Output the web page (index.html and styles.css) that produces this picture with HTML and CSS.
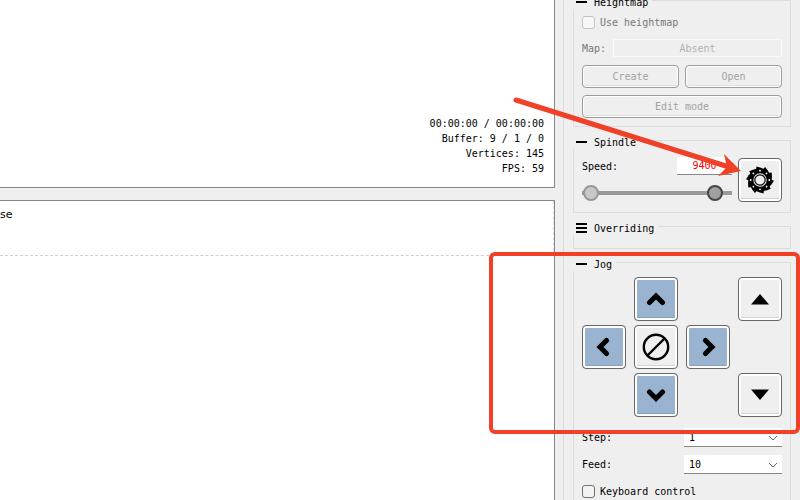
FILE: index.html
```html
<!DOCTYPE html>
<html lang="en">
<head>
<meta charset="utf-8">
<title>Machine control</title>
<link rel="stylesheet" href="styles.css">
</head>
<body>
<div class="app">
  <main class="work">
    <section class="view">
      <p>00:00:00 / 00:00:00</p>
      <p>Buffer: 9 / 1 / 0</p>
      <p>Vertices: 145</p>
      <p>FPS: 59</p>
    </section>
    <section class="console"><p class="entry">se</p></section>
  </main>
  <aside class="side">
    <section class="group muted">
      <h2><span class="minus"></span>Heightmap</h2>
      <label class="check"><input type="checkbox" disabled>Use heightmap</label>
      <div class="map-row"><label for="map">Map:</label><input id="map" type="text" value="Absent" disabled></div>
      <div class="pair"><button class="btn" disabled>Create</button><button class="btn" disabled>Open</button></div>
      <button class="btn wide" disabled>Edit mode</button>
    </section>

    <section class="group spindle">
      <h2><span class="minus"></span>Spindle</h2>
      <div class="spindle-row">
        <div class="speed">
          <div class="speed-row"><label for="speed">Speed:</label><input id="speed" type="text" value="9400"></div>
          <div class="range">
            <input class="low" type="range" min="0" max="100" value="1" aria-label="Minimum speed">
            <input class="high" type="range" min="0" max="100" value="93" aria-label="Spindle speed">
          </div>
        </div>
        <button class="btn tool" aria-label="Spindle on">
          <svg width="28" height="28" viewBox="-14 -14 28 28">
            <defs><path id="tooth" d="M-4-10L-3.500-13.500L1-12.200L4-10Z"/><circle id="hole" cy="-9.300" r="0.900"/></defs>
            <circle r="9.200" fill="none" stroke="#000" stroke-width="5"/>
            <use href="#tooth"/><use href="#tooth" transform="rotate(36)"/><use href="#tooth" transform="rotate(72)"/><use href="#tooth" transform="rotate(108)"/><use href="#tooth" transform="rotate(144)"/><use href="#tooth" transform="rotate(180)"/><use href="#tooth" transform="rotate(216)"/><use href="#tooth" transform="rotate(252)"/><use href="#tooth" transform="rotate(288)"/><use href="#tooth" transform="rotate(324)"/>
            <g fill="#fff"><use href="#hole"/><use href="#hole" transform="rotate(45)"/><use href="#hole" transform="rotate(90)"/><use href="#hole" transform="rotate(135)"/><use href="#hole" transform="rotate(180)"/><use href="#hole" transform="rotate(225)"/><use href="#hole" transform="rotate(270)"/><use href="#hole" transform="rotate(315)"/></g>
            <circle r="5.200" fill="none" stroke="#000" stroke-width="1.200"/>
          </svg>
        </button>
      </div>
    </section>

    <section class="group closed">
      <h2><span class="minus lines"></span>Overriding</h2>
    </section>

    <section class="group jog">
      <h2><span class="minus"></span>Jog</h2>
      <div class="pad">
        <button class="btn tool blue north" aria-label="Y plus"><svg width="20" height="20" viewBox="-10 -10 20 20"><path class="chev" d="M-6.500 3.500L0-3L6.500 3.500"/></svg></button>
        <button class="btn tool up" aria-label="Z plus"><svg width="20" height="20" viewBox="-10 -10 20 20"><path d="M-9 5.500L0-5L9 5.500Z"/></svg></button>
        <button class="btn tool blue west" aria-label="X minus"><svg width="20" height="20" viewBox="-10 -10 20 20"><path class="chev" d="M2.500-6.500L-4 0L2.500 6.500"/></svg></button>
        <button class="btn tool stop" aria-label="Stop"><svg width="28" height="28" viewBox="-14 -14 28 28"><g fill="none" stroke="#000" stroke-width="2.400"><circle r="12.200"/><path d="M-8.500 8.500L8.500-8.500"/></g></svg></button>
        <button class="btn tool blue east" aria-label="X plus"><svg width="20" height="20" viewBox="-10 -10 20 20"><path class="chev" d="M-2.500-6.500L4 0L-2.500 6.500"/></svg></button>
        <button class="btn tool blue south" aria-label="Y minus"><svg width="20" height="20" viewBox="-10 -10 20 20"><path class="chev" d="M-6.500-3L0 3.500L6.500-3"/></svg></button>
        <button class="btn tool down" aria-label="Z minus"><svg width="20" height="20" viewBox="-10 -10 20 20"><path d="M-9-5.500L0 5L9-5.500Z"/></svg></button>
      </div>
      <div class="field"><label for="step">Step:</label><span class="combo"><select id="step"><option>1</option></select><svg width="10" height="6" viewBox="0 0 10 6"><path d="M1 1L5 5L9 1"/></svg></span></div>
      <div class="field"><label for="feed">Feed:</label><span class="combo"><select id="feed"><option>10</option></select><svg width="10" height="6" viewBox="0 0 10 6"><path d="M1 1L5 5L9 1"/></svg></span></div>
      <label class="check"><input type="checkbox">Keyboard control</label>
    </section>
  </aside>
  <div class="frame"></div>
  <svg class="arrow" width="232" height="82" viewBox="0 0 232 82"><path d="M5 5L218 72" stroke="#f04128" stroke-width="5" stroke-linecap="round"/><path d="M213 59L230 76L207 81L216 72Z" fill="#f04128"/></svg>
</div>
</body>
</html>
```

FILE: styles.css
```css
* { box-sizing: border-box; }
body {
  margin: 0;
  background: #efefef;
  color: #000;
  font: 10px/15px "DejaVu Sans Mono", "Liberation Mono", monospace;
}
h2, p { margin: 0; font: inherit; }
input, select, button { margin: 0; font: inherit; color: inherit; }
svg { display: block; }
.app {
  position: relative;
  display: grid;
  grid-template-columns: 1fr 245px;
  height: 100vh;
  overflow: hidden;
}

.work { display: flex; flex-direction: column; gap: 12px; min-height: 0; }
.view, .console { background: #fff; border-right: 1px solid #828790; }
.view {
  display: flex;
  flex-direction: column;
  justify-content: flex-end;
  flex: 0 0 188px;
  padding: 0 10px 11px 0;
  border-bottom: 1px solid #828790;
  text-align: right;
}
.console { flex: 1; border-top: 1px solid #828790; }
.entry {
  height: 55px;
  padding-top: 6px;
  border-right: 1px dashed #dcdcdc;
  border-bottom: 1px dashed #d0d0d0;
  font: 11px/15px "DejaVu Sans", sans-serif;
}

.side {
  display: flex;
  flex-direction: column;
  gap: 13px;
  margin-left: 8px;
  padding: 0 9px;
  border-left: 1px solid #dcdcdc;
}
.group { padding: 0 8px 8px; border: 1px solid #dcdcdc; }
.group h2 {
  display: flex;
  align-items: center;
  gap: 7px;
  width: fit-content;
  height: 16px;
  margin: -8px 0 0 -9px;
  padding: 3px 4px 0 3px;
  background: #efefef;
}
.minus { width: 11px; height: 2px; margin-bottom: 2px; background: #000; }
.lines {
  height: 10px;
  background: linear-gradient(#000 0 2px, transparent 2px 4px, #000 4px 6px, transparent 6px 8px, #000 8px);
}
.closed { height: 23px; padding-bottom: 0; }
.muted > label, .muted > div { color: #777; }

.check { display: flex; align-items: center; gap: 5px; height: 13px; }
.check input {
  appearance: none;
  width: 13px;
  height: 13px;
  border: 1px solid #707070;
  border-radius: 3px;
  background: #f3f3f3;
}
.check input:disabled { border-color: #c4c4c4; background: #f8f8f8; }
.muted .check { margin-top: 7px; }

.map-row { display: flex; align-items: center; justify-content: space-between; margin: 10px 0 8px; }
.map-row input {
  width: 169px;
  height: 18px;
  padding: 0;
  border: 1px solid #f9f9f9;
  background: #efefef;
  color: #b5b1b1;
  text-align: center;
}
.pair { display: grid; grid-template-columns: 1fr 1fr; gap: 6px; margin-bottom: 7px; }
.btn {
  display: flex;
  align-items: center;
  justify-content: center;
  height: 23px;
  padding: 0;
  border: 1px solid #686868;
  border-radius: 4px;
  background: #efefef;
  box-shadow: inset 0 0 0 2px #fff, inset 0 -3px 0 0 #d4d4d4;
}
.btn:disabled { border-color: #9c9c9c; color: #a3a3a3; box-shadow: inset 0 0 0 1px #fff, inset 0 -3px 0 -1px #dedede; }
.wide { width: 100%; }
.tool { width: 44px; height: 44px; }
.blue { background: #9ab3d1; box-shadow: inset 0 0 0 2px #fff, inset 0 -3px 0 0 #86a0c0; }

.spindle { padding-bottom: 10px; }
.spindle-row { display: flex; justify-content: space-between; padding-top: 9px; }
.speed { width: 150px; }
.speed-row { display: flex; justify-content: space-between; align-items: center; height: 18px; margin-top: -1px; }
.speed-row input {
  width: 55px;
  height: 18px;
  padding: 0;
  border: 0;
  border-bottom: 1px solid #868686;
  background: #fff;
  color: #f00000;
  text-align: center;
}
.range { display: grid; margin-top: 10px; }
.range input {
  grid-area: 1 / 1;
  appearance: none;
  width: 100%;
  height: 16px;
  background: none;
  pointer-events: none;
}
.range input::-webkit-slider-thumb {
  appearance: none;
  width: 16px;
  height: 16px;
  border: 2px solid #454545;
  border-radius: 50%;
  background: #a0a0a0;
  pointer-events: auto;
}
.range .low { background: linear-gradient(#999, #999) center / 100% 4px no-repeat; }
.range .low::-webkit-slider-thumb { border-color: #989898; background: #c9c8c7; }

.pad {
  display: grid;
  grid-template-columns: repeat(4, 44px);
  grid-template-rows: repeat(3, 44px);
  gap: 4px 8px;
  margin: 6px 0 11px;
}
.north { grid-area: 1 / 2; }
.up { grid-area: 1 / 4; }
.west { grid-area: 2 / 1; }
.stop { grid-area: 2 / 2; }
.east { grid-area: 2 / 3; }
.south { grid-area: 3 / 2; }
.down { grid-area: 3 / 4; }
.chev { fill: none; stroke: #000; stroke-width: 5; stroke-linecap: round; }
.field { display: flex; align-items: center; justify-content: space-between; margin-bottom: 8px; }
.combo { display: grid; align-items: center; width: 98px; }
.combo select {
  grid-area: 1 / 1;
  appearance: none;
  height: 19px;
  padding: 0 5px;
  border: 0;
  border-bottom: 1px solid #868686;
  border-radius: 0;
  background: #fff;
}
.combo svg {
  grid-area: 1 / 1;
  justify-self: end;
  margin-right: 4px;
  fill: none;
  stroke: #666;
  pointer-events: none;
}
.jog .check { margin-top: 11px; }

.frame {
  position: absolute;
  top: 252px;
  right: 0;
  width: 311px;
  height: 182px;
  border: 4px solid #f04128;
  border-radius: 6px;
  pointer-events: none;
}
.arrow { position: absolute; top: 95px; right: 57px; overflow: visible; pointer-events: none; }
```
